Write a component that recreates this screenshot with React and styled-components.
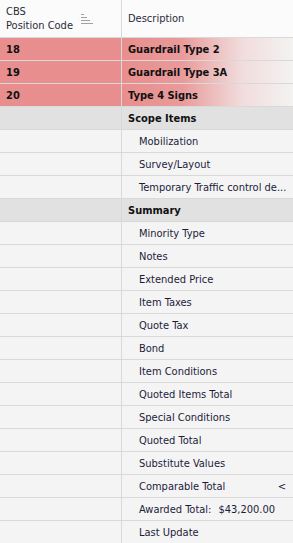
import React from "react";
import styled, { createGlobalStyle } from "styled-components";

const GlobalStyle = createGlobalStyle`
  html, body {
    margin: 0;
    padding: 0;
    background: #f4f4f4;
  }
  body {
    font-family: "DejaVu Sans Condensed", "DejaVu Sans", sans-serif;
    font-size: 11px;
    color: #1c1c3a;
  }
`;

const Grid = styled.div`
  width: 293px;
  height: 543px;
  overflow: hidden;
  background: #f4f4f4;
`;

const HeaderRow = styled.div`
  display: grid;
  grid-template-columns: 122px 1fr;
  height: 38px;
  background: #fbfbfb;
  border-bottom: 1px solid #d9d9d9;
  box-sizing: border-box;
`;

const HeaderCell = styled.div`
  display: flex;
  align-items: center;
  gap: 8px;
  padding-left: 6px;
  padding-top: 1px;
  border-right: ${(p) => (p.$last ? "none" : "1px solid #d9d9d9")};
  color: #2a2a3a;
  line-height: 14px;
`;

const SortIcon = () => (
  <svg width="12" height="10" viewBox="0 0 12 10">
    <g fill="#a0a0a0">
      <rect x="0" y="0" width="3" height="1" />
      <rect x="0" y="3" width="6" height="1" />
      <rect x="0" y="6" width="9" height="1" />
      <rect x="0" y="9" width="12" height="1" />
    </g>
  </svg>
);

const Row = styled.div`
  display: grid;
  grid-template-columns: 122px 1fr;
  height: 23px;
  border-bottom: 1px solid #d9d9d9;
  box-sizing: border-box;
  background: ${(p) =>
    p.$kind === "hl" ? "#e88e8e" : p.$kind === "group" ? "#e1e1e1" : "#f4f4f4"};
`;

const CodeCell = styled.div`
  display: flex;
  align-items: center;
  padding-left: 6px;
  padding-top: 1px;
  border-right: 1px solid #d9d9d9;
  font-weight: ${(p) => (p.$bold ? "bold" : "normal")};
  color: #111;
`;

const DescCell = styled.div`
  display: flex;
  align-items: center;
  justify-content: space-between;
  padding-left: ${(p) => (p.$indent ? "17px" : "6px")};
  padding-right: 7px;
  padding-top: 1px;
  white-space: nowrap;
  overflow: hidden;
  font-weight: ${(p) => (p.$bold ? "bold" : "normal")};
  color: ${(p) => (p.$bold ? "#111" : "#1c1c3a")};
  background: ${(p) =>
    p.$fade
      ? "linear-gradient(to right, #e88e8e 0%, #e99a9a 35%, #f1dcdc 70%, #f4f2f2 100%)"
      : "transparent"};
`;

const Amount = styled.span`
  margin-left: 7px;
`;

const highlighted = [
  ["18", "Guardrail Type 2"],
  ["19", "Guardrail Type 3A"],
  ["20", "Type 4 Signs"],
];

const scopeItems = ["Mobilization", "Survey/Layout", "Temporary Traffic control de..."];

const summaryItems = [
  "Minority Type",
  "Notes",
  "Extended Price",
  "Item Taxes",
  "Quote Tax",
  "Bond",
  "Item Conditions",
  "Quoted Items Total",
  "Special Conditions",
  "Quoted Total",
  "Substitute Values",
];

export default function App() {
  return (
    <>
      <GlobalStyle />
      <Grid>
        <HeaderRow>
          <HeaderCell>
            <span>
              CBS
              <br />
              Position Code
            </span>
            <SortIcon />
          </HeaderCell>
          <HeaderCell $last>Description</HeaderCell>
        </HeaderRow>

        {highlighted.map(([code, desc]) => (
          <Row key={code} $kind="hl">
            <CodeCell $bold>{code}</CodeCell>
            <DescCell $bold $fade>{desc}</DescCell>
          </Row>
        ))}

        <Row $kind="group">
          <CodeCell />
          <DescCell $bold>Scope Items</DescCell>
        </Row>
        {scopeItems.map((s) => (
          <Row key={s}>
            <CodeCell />
            <DescCell $indent>{s}</DescCell>
          </Row>
        ))}

        <Row $kind="group">
          <CodeCell />
          <DescCell $bold>Summary</DescCell>
        </Row>
        {summaryItems.map((s) => (
          <Row key={s}>
            <CodeCell />
            <DescCell $indent>{s}</DescCell>
          </Row>
        ))}
        <Row>
          <CodeCell />
          <DescCell $indent>
            Comparable Total
            <span>&lt;</span>
          </DescCell>
        </Row>
        <Row>
          <CodeCell />
          <DescCell $indent>
            <span>
              Awarded Total:<Amount>$43,200.00</Amount>
            </span>
          </DescCell>
        </Row>
        <Row>
          <CodeCell />
          <DescCell $indent>Last Update</DescCell>
        </Row>
      </Grid>
    </>
  );
}
